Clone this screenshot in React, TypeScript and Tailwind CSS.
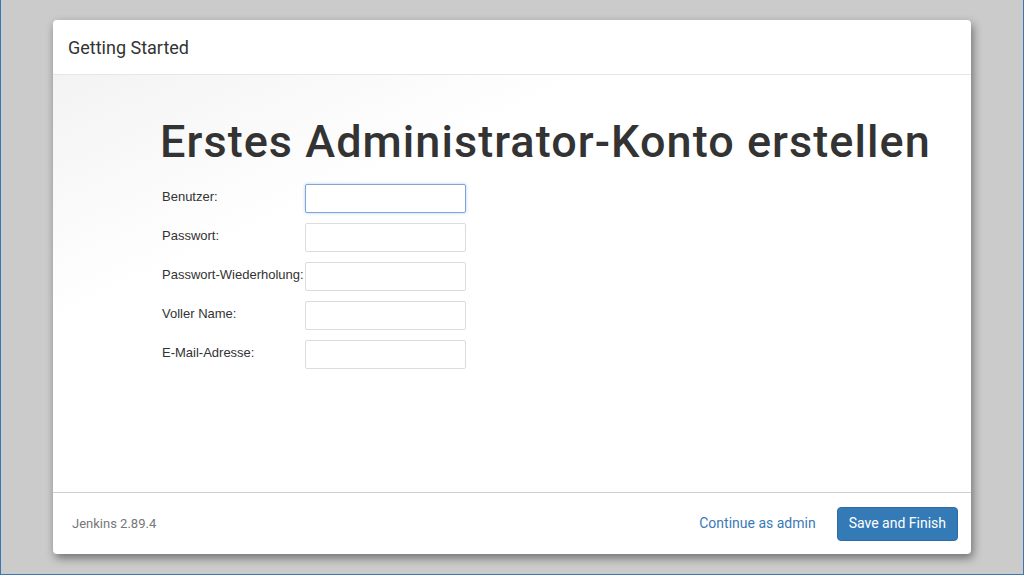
const fields = ["Benutzer:", "Passwort:", "Passwort-Wiederholung:", "Voller Name:", "E-Mail-Adresse:"]

export default function App() {
  return (
    <div className="h-[575px] w-full overflow-hidden bg-[#cbcbcb] border-x border-b border-[#3b77b3] pt-[20px] pl-[52px]">
      <div className="w-[918px] h-[534px] bg-white rounded-[4px] shadow-[2px_4px_10px_rgba(0,0,0,0.45)] flex flex-col overflow-hidden font-['Roboto',sans-serif]">
        {/* header */}
        <div className="h-[55px] shrink-0 flex items-center px-[15px] border-b border-[#e6e6e6]">
          <h4 className="text-[18px] text-[#333] font-normal">Getting Started</h4>
        </div>

        {/* body */}
        <div className="flex-1 bg-linear-to-br from-[#f3f3f3] via-white via-30% to-white pl-[107px]">
          <h1 className="mt-[44px] text-[45px] leading-none text-[#333] font-medium tracking-[1.05px]">
            Erstes Administrator-Konto erstellen
          </h1>
          <div className="mt-[20px] ml-[2px] flex flex-col gap-[10px] font-['Liberation_Sans',Arial,sans-serif] text-[13px] text-[#333]">
            {fields.map((f, i) => (
              <div key={f} className="flex items-center">
                <label className="w-[143px] -mt-[3px]">{f}</label>
                <input
                  type={f.startsWith("Passwort") ? "password" : "text"}
                  className={
                    i === 0
                      ? "w-[161px] h-[29px] rounded-[2px] border border-[#7da6d9] bg-white outline-none shadow-[0_0_3px_rgba(102,150,220,0.5)]"
                      : "w-[161px] h-[29px] rounded-[2px] border border-[#dcdcdc] bg-white outline-none"
                  }
                />
              </div>
            ))}
          </div>
        </div>

        {/* footer */}
        <div className="h-[62px] shrink-0 border-t border-[#cfcfcf] flex items-center px-[19px]">
          <span className="text-[13px] text-[#777]">Jenkins 2.89.4</span>
          <div className="ml-auto flex items-center gap-[21px] -mr-[6px]">
            <a className="text-[14px] text-[#3a7ab6] cursor-pointer">Continue as admin</a>
            <button className="h-[34px] px-[11px] rounded-[4px] bg-[#337ab7] text-white text-[14px] border border-[#2e6da4]">
              Save and Finish
            </button>
          </div>
        </div>
      </div>
    </div>
  )
}
